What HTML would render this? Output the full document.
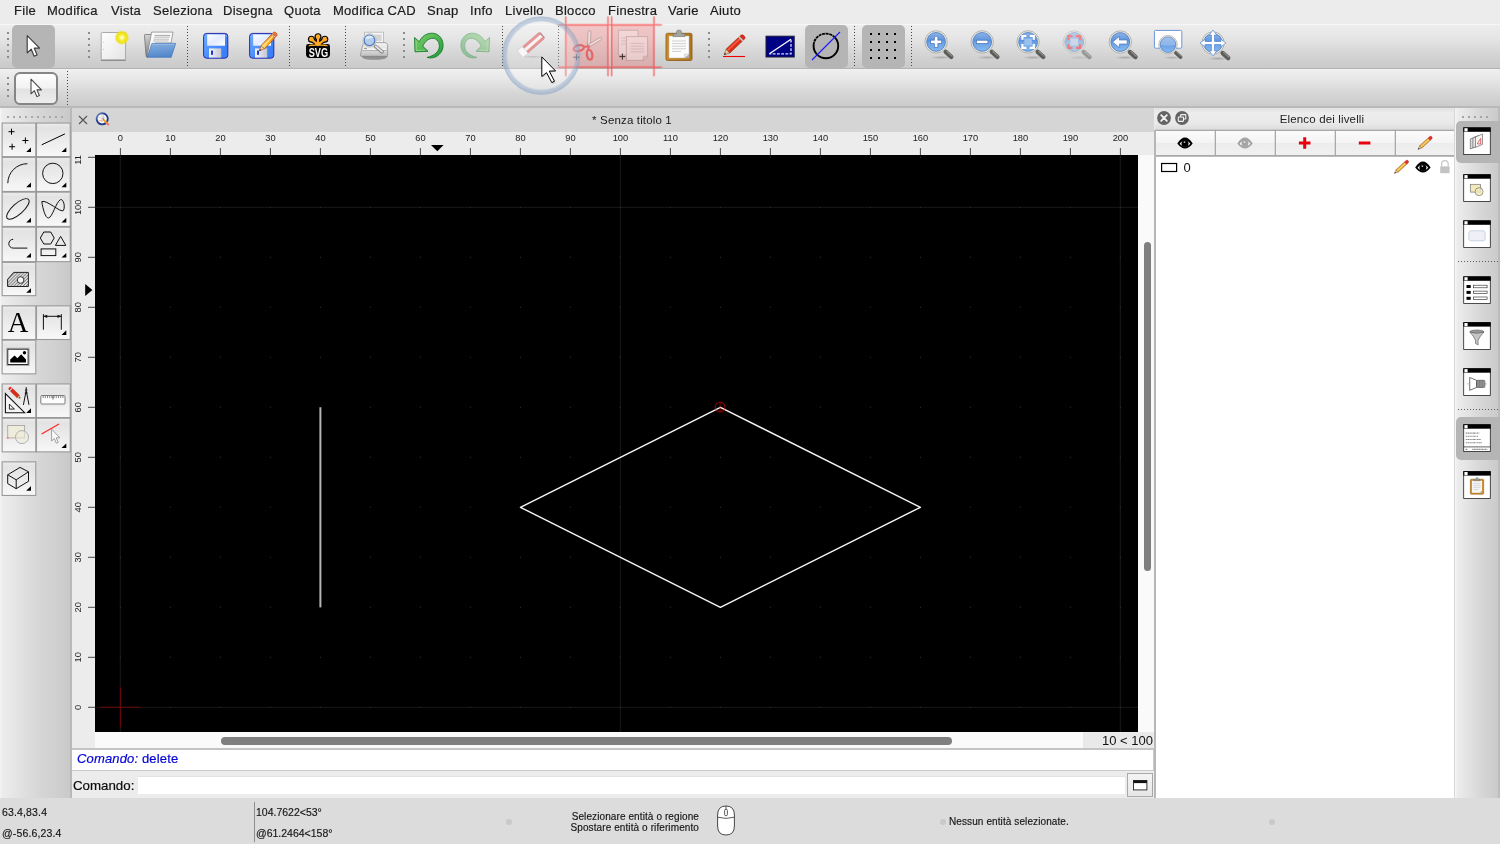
<!DOCTYPE html>
<html lang="it">
<head>
<meta charset="utf-8">
<title>Senza titolo 1</title>
<style>
html,body{margin:0;padding:0;}
body{will-change:transform;width:1500px;height:844px;position:relative;overflow:hidden;background:#ececec;font-family:"Liberation Sans",sans-serif;color:#1a1a1a;}
.abs{position:absolute;}
svg{position:absolute;overflow:visible;}
#menubar{left:0;top:0;width:1500px;height:24px;background:#ececec;}
#menubar span{position:absolute;top:2px;font-size:13px;letter-spacing:0.28px;line-height:18px;white-space:nowrap;color:#1c1c1c;-webkit-text-stroke:0.2px #1c1c1c;}
#tb1{left:0;top:24px;width:1500px;height:45px;background:linear-gradient(#ededed 0%,#e6e6e6 28%,#d6d6d6 65%,#c9c9c9 100%);border-top:1px solid #f6f6f6;border-bottom:1px solid #b4b4b4;box-sizing:border-box;}
#tb2{left:0;top:69px;width:1500px;height:39px;background:linear-gradient(#efefef 0%,#e6e6e6 28%,#d6d6d6 65%,#cbcbcb 100%);border-top:1px solid #f0f0f0;border-bottom:2px solid #b9b9b9;box-sizing:border-box;}
.sel{position:absolute;background:#b5b5b5;border-radius:5px;}
.hd{position:absolute;width:2px;height:2px;background:#8c8c8c;}
.vsep{position:absolute;width:1px;background:repeating-linear-gradient(#484848 0,#484848 1px,transparent 1px,transparent 3px);}
#leftpanel{left:0;top:108px;width:72px;height:690px;background:linear-gradient(90deg,#f6f6f6 0%,#ededed 2.5%,#e1e1e1 30%,#d6d6d6 55%,#cacaca 96.5%,#b9b9b9 97.5%,#b9b9b9 100%);}
.tbtn{position:absolute;width:33.6px;height:33.6px;box-sizing:border-box;border:1px solid #9c9c9c;background:linear-gradient(#dcdcdc 0%,#efefef 46%,#e5e5e5 50%,#f3f3f3 100%);}
.tbtn svg{left:-1px;top:-1px;}
#tabbar{left:72px;top:108px;width:1083px;height:24px;background:#d5d5d5;}
#tabtitle{left:532px;top:112px;width:200px;text-align:center;font-size:11.5px;letter-spacing:0.15px;line-height:16px;color:#1a1a1a;white-space:nowrap;}
#rulerbg{left:72px;top:132px;width:1082px;height:617px;background:#ececec;}
#vscroll{left:1138px;top:155px;width:16px;height:577px;background:#fafafa;}
#vthumb{left:1144px;top:242px;width:7px;height:329px;border-radius:4px;background:#7f7f7f;}
#hscroll{left:95px;top:732px;width:988px;height:17px;background:#fafafa;}
#hthumb{left:221px;top:736.5px;width:731px;height:8px;border-radius:4px;background:#7f7f7f;}
#zoomlabel{left:1083px;top:733px;width:70px;height:15px;background:#e9e9e9;font-size:13px;line-height:15px;text-align:right;color:#111;white-space:nowrap;}
#cmdhist{left:72px;top:748px;width:1082px;height:23px;background:#fff;border-top:2px solid #c4c4c4;border-bottom:1px solid #c9c9c9;border-right:1px solid #c9c9c9;box-sizing:border-box;font-size:13px;letter-spacing:0.15px;line-height:18px;color:#0505d6;-webkit-text-stroke:0.2px #0505d6;padding-left:5px;white-space:nowrap;}
#cmdline{left:72px;top:771px;width:1082px;height:27px;background:#ececec;}
#cmdlabel{left:73px;top:778px;font-size:13.3px;line-height:16px;color:#0c0c0c;-webkit-text-stroke:0.2px #0c0c0c;white-space:nowrap;}
#cmdinput{left:138px;top:776px;width:987px;height:18px;background:#fff;border-top:1px solid #e2e2e2;box-sizing:border-box;}
#cmdbtn{left:1127px;top:773px;width:26px;height:24px;box-sizing:border-box;border:1px solid #a8a8a8;background:linear-gradient(#f4f4f4,#e6e6e6);}
#statusbar{left:0;top:798px;width:1500px;height:46px;background:#dcdcdc;font-size:10.5px;letter-spacing:0.15px;color:#161616;-webkit-text-stroke:0.15px #161616;}
#statusbar span{position:absolute;white-space:nowrap;line-height:12px;}
#statusbar span.h{font-size:10px;letter-spacing:0.1px;}
.sdot{position:absolute;width:6px;height:6px;border-radius:3px;background:#c9c9c9;}
#dock{left:1154px;top:108px;width:300px;height:690px;background:#ececec;}
#docktitle{left:1155px;top:108px;width:299px;height:22px;background:linear-gradient(#e2e2e2 0%,#ededed 25%,#e9e9e9 70%,#dcdcdc 100%);}
#docktitle span{position:absolute;left:67px;width:200px;top:3px;text-align:center;font-size:11.5px;letter-spacing:0.15px;line-height:16px;color:#222;white-space:nowrap;}
.lbtn{position:absolute;top:130px;height:26px;box-sizing:border-box;border:1px solid #a9a9a9;box-shadow:0 0 0 0.300px #a9a9a9;background:linear-gradient(#fbfbfb 0%,#f4f4f4 48%,#ececec 52%,#f1f1f1 100%);}
#layerlist{left:1155px;top:156px;width:299px;height:642px;background:#fff;border-top:1px solid #bcbcbc;box-sizing:border-box;}
#docksep{left:1154px;top:130px;width:1.700px;height:668px;background:#b7b7b7;}
#rightbar{left:1454px;top:108px;width:46px;height:690px;background:linear-gradient(90deg,#c8c8c8 0%,#f4f4f4 3%,#ececec 8%,#e1e1e1 35%,#d6d6d6 60%,#cbcbcb 95%,#bcbcbc 96%,#bcbcbc 100%);}
.hsep{position:absolute;height:1px;background:repeating-linear-gradient(90deg,#5a5a5a 0,#5a5a5a 1px,transparent 1px,transparent 3px);}
</style>
</head>
<body>
<div id="menubar" class="abs">
<span style="left:14px">File</span><span style="left:47px">Modifica</span><span style="left:111px">Vista</span><span style="left:153px">Seleziona</span><span style="left:223px">Disegna</span><span style="left:284px">Quota</span><span style="left:333px">Modifica CAD</span><span style="left:427px">Snap</span><span style="left:470px">Info</span><span style="left:505px">Livello</span><span style="left:555px">Blocco</span><span style="left:608px">Finestra</span><span style="left:668px">Varie</span><span style="left:710px">Aiuto</span>
</div>
<div id="tb1" class="abs"></div>
<div id="tb2" class="abs"></div>
<div class="sel" style="left:12px;top:25px;width:43px;height:43px"></div>
<div class="sel" style="left:805px;top:25px;width:43px;height:43px"></div>
<div class="sel" style="left:862px;top:25px;width:43px;height:43px"></div>
<!-- handles -->
<div class="hd" style="left:7px;top:32px;box-shadow:0 6px #8c8c8c,0 12px #8c8c8c,0 18px #8c8c8c,0 24px #8c8c8c"></div>
<div class="hd" style="left:88px;top:32px;box-shadow:0 6px #8c8c8c,0 12px #8c8c8c,0 18px #8c8c8c,0 24px #8c8c8c"></div>
<div class="hd" style="left:403px;top:32px;box-shadow:0 6px #8c8c8c,0 12px #8c8c8c,0 18px #8c8c8c,0 24px #8c8c8c"></div>
<div class="hd" style="left:708px;top:32px;box-shadow:0 6px #8c8c8c,0 12px #8c8c8c,0 18px #8c8c8c,0 24px #8c8c8c"></div>
<div class="hd" style="left:7px;top:77px;box-shadow:0 6px #8c8c8c,0 12px #8c8c8c,0 18px #8c8c8c"></div>
<!-- dotted separators -->
<div class="vsep" style="left:187px;top:26px;height:40px"></div>
<div class="vsep" style="left:289px;top:26px;height:40px"></div>
<div class="vsep" style="left:345px;top:26px;height:40px"></div>
<div class="vsep" style="left:502px;top:26px;height:40px"></div>
<div class="vsep" style="left:558px;top:26px;height:40px"></div>
<div class="vsep" style="left:854px;top:26px;height:40px"></div>
<div class="vsep" style="left:911px;top:26px;height:40px"></div>
<div class="vsep" style="left:67px;top:71px;height:34px"></div>
<!-- toolbar 2 button -->
<div class="abs" style="left:14px;top:72px;width:44px;height:33px;box-sizing:border-box;border:2px solid #858585;border-radius:6px;background:linear-gradient(#fdfdfd 0%,#f2f2f2 48%,#e2e2e2 52%,#ededed 100%)"></div>
<svg id="tbicons" style="left:0;top:0" width="1500" height="108" viewBox="0 0 1500 108">
<defs>
<linearGradient id="gPage" x1="0" y1="0" x2="1" y2="1"><stop offset="0" stop-color="#ffffff"/><stop offset="1" stop-color="#e4e4e4"/></linearGradient>
<radialGradient id="gGlow"><stop offset="0" stop-color="#ffffff"/><stop offset="0.22" stop-color="#fff88a"/><stop offset="0.5" stop-color="#f2e818"/><stop offset="0.8" stop-color="#eee012" stop-opacity="0.85"/><stop offset="1" stop-color="#eee012" stop-opacity="0"/></radialGradient>
<linearGradient id="gFolder" x1="0" y1="0" x2="0.200" y2="1"><stop offset="0" stop-color="#88b0e0"/><stop offset="1" stop-color="#5488cc"/></linearGradient><linearGradient id="gFBack" x1="0" y1="0" x2="0" y2="1"><stop offset="0" stop-color="#d4d4d4"/><stop offset="1" stop-color="#7a7a7a"/></linearGradient>
<linearGradient id="gFloppy" x1="0" y1="0" x2="1" y2="0.6"><stop offset="0" stop-color="#74aeff"/><stop offset="0.5" stop-color="#4c90ff"/><stop offset="1" stop-color="#3a7ef8"/></linearGradient>
<linearGradient id="gLabel" x1="0" y1="0" x2="1" y2="1"><stop offset="0" stop-color="#ffffff"/><stop offset="0.5" stop-color="#e4ebff"/><stop offset="1" stop-color="#ffffff"/></linearGradient>
<linearGradient id="gShut" x1="0" y1="0" x2="1" y2="0"><stop offset="0" stop-color="#f4f4f8"/><stop offset="1" stop-color="#c4c6d2"/></linearGradient>
<linearGradient id="gPencilY" x1="0" y1="0" x2="1" y2="0"><stop offset="0" stop-color="#ffd24a"/><stop offset="0.5" stop-color="#ffb020"/><stop offset="1" stop-color="#e88a10"/></linearGradient>
<linearGradient id="gGreen" x1="0" y1="0" x2="1" y2="1"><stop offset="0" stop-color="#7fd06a"/><stop offset="1" stop-color="#1f9a3a"/></linearGradient>
<linearGradient id="gLens" x1="0" y1="0" x2="0" y2="1"><stop offset="0" stop-color="#8fb4e6"/><stop offset="0.45" stop-color="#5a92dc"/><stop offset="0.5" stop-color="#6aa0e4"/><stop offset="1" stop-color="#86baf0"/></linearGradient>
<linearGradient id="gPrinter" x1="0" y1="0" x2="0" y2="1"><stop offset="0" stop-color="#f4f4f4"/><stop offset="0.45" stop-color="#e2e2e2"/><stop offset="1" stop-color="#bcbcbc"/></linearGradient>
<linearGradient id="gClip" x1="0" y1="0" x2="1" y2="0"><stop offset="0" stop-color="#c88a2a"/><stop offset="1" stop-color="#b07418"/></linearGradient>
<radialGradient id="gShadow"><stop offset="0" stop-color="#000" stop-opacity="0.2"/><stop offset="1" stop-color="#000" stop-opacity="0"/></radialGradient>
<g id="lens">
 <ellipse cx="5" cy="15.6" rx="11" ry="1.8" fill="url(#gShadow)"/>
 <path d="M9.6 10L15.2 15" stroke="#5c5c58" stroke-width="4.4" stroke-linecap="round"/>
 <path d="M10.6 9.4L16 14.2" stroke="#8e8e8a" stroke-width="1.2" stroke-linecap="round"/>
 <circle cx="0" cy="0" r="11.2" fill="#e8e8e2" stroke="#a6a6a0" stroke-width="0.8"/>
 <circle cx="0" cy="0" r="9.4" fill="url(#gLens)" stroke="#4a78c0" stroke-width="0.8"/>
</g>
<path id="arrow" d="M0 0V16.6L3.9 13.1L6.7 19.8L9.5 18.6L6.8 12.1H11.9Z"/>
</defs>

<!-- select arrow (tb1) -->
<use href="#arrow" transform="translate(27.2,35.6) scale(1.04)" fill="#fff" stroke="#3c3c3c" stroke-width="1.1" stroke-linejoin="round"/>
<!-- select arrow (tb2) -->
<use href="#arrow" transform="translate(31,79.2) scale(0.88)" fill="#fff" stroke="#444" stroke-width="1.2" stroke-linejoin="round"/>

<!-- new file -->
<rect x="101.2" y="32.5" width="24.4" height="27.6" rx="1.2" fill="url(#gPage)" stroke="#a2a2a2" stroke-width="0.9"/>
<path d="M101 60.3H125.8" stroke="#8a8a8a" stroke-width="1.2"/>
<path d="M103 42.3h1.2M103 49.5h1.2" stroke="#bbb" stroke-width="0.8"/>
<circle cx="121.9" cy="37.6" r="7.3" fill="url(#gGlow)"/>

<!-- open folder -->
<path d="M145.200 34.500h5.600q0.800 0 0.800 0.800l-3.600 21.700h-1q-0.800 0-0.900-0.800l-1.700-20.900q0-0.800 0.800-0.800z" fill="url(#gFBack)" stroke="#6a6a6a" stroke-width="0.700"/>
<path d="M151.600 32.100h21.400l-2 10.900h-16l-6.800 13.400l-1-0.400z" fill="#fbfbfb" stroke="#7c7c7c" stroke-width="0.700" stroke-linejoin="round"/>
<path d="M154.600 35.600h15.600" stroke="#b2b2b2" stroke-width="1.500"/>
<path d="M154 37.600h15.600M153.500 39.300h15.600M153 41h15.600" stroke="#d0d0d0" stroke-width="1.300"/>
<path d="M151.900 43.400h23.800l-4.500 13.900h-24z" fill="url(#gFolder)" stroke="#3f72b8" stroke-width="0.700" stroke-linejoin="round"/>
<path d="M152.600 44.300h22" stroke="#a6c6ec" stroke-width="0.700"/>
<!-- save -->
<g id="floppy">
<rect x="203.6" y="33.4" width="24.2" height="24.8" rx="3" fill="url(#gFloppy)" stroke="#2a2aa8" stroke-width="1"/>
<rect x="207.200" y="34.400" width="17.800" height="11.300" fill="url(#gLabel)"/>
<rect x="209" y="48.4" width="12.2" height="9.2" fill="url(#gShut)"/>
<rect x="211" y="50.6" width="2" height="4.2" fill="#1a3ad0"/>
<rect x="225.6" y="35.4" width="0.9" height="1.2" fill="#cfe0ff"/>
</g>
<!-- save as -->
<use href="#floppy" x="46"/>
<g transform="translate(259.300,50.900) rotate(-46.800)">
<path d="M0 0L5.200 -2.400L5.200 2.400Z" fill="#ecd0a8" stroke="#9a3a10" stroke-width="0.500"/>
<path d="M0 0L1.900 -0.900L1.900 0.900Z" fill="#222"/>
<rect x="5.200" y="-2.400" width="15.400" height="4.800" fill="url(#gPencilY)" stroke="#b03a10" stroke-width="0.600"/>
<rect x="5.200" y="-0.900" width="15.400" height="1.500" fill="#ffe890" opacity="0.900"/>
<rect x="20.600" y="-2.400" width="1.200" height="4.800" fill="#e4e0d8" stroke="#b03a10" stroke-width="0.300"/>
<path d="M21.800 -2.400h1.300a1.600 2.400 0 0 1 0 4.800h-1.300z" fill="#f07a2a" stroke="#b03010" stroke-width="0.500"/>
</g>

<!-- SVG export icon -->
<g>
<path d="M306 46.400q0-2.400 2.400-2.400h19.200q2.400 0 2.400 2.400v7.600q0 4-4 4h-16q-4 0-4-4z" fill="#050505"/>
<g stroke="#050505" stroke-width="4.600" stroke-linecap="round"><path d="M318 44.600V37M318 44.600L311.800 39.600M318 44.600L324.400 39.600"/></g>
<g fill="#050505"><circle cx="318" cy="36.700" r="3.500"/><circle cx="311.400" cy="39.200" r="3.500"/><circle cx="324.800" cy="39.200" r="3.500"/></g>
<g stroke="#ffa928" stroke-width="2.300" stroke-linecap="round"><path d="M318 44.800V37M318 44.800L311.800 39.600M318 44.800L324.400 39.600"/></g>
<g fill="#ffa928"><circle cx="318" cy="36.700" r="2.350"/><circle cx="311.400" cy="39.200" r="2.350"/><circle cx="324.800" cy="39.200" r="2.350"/><path d="M308.200 46.200q0.600-1.600 3-1.600h13.800q2.400 0 3 1.600q-4.900-0.600-9.900-0.400q-5-0.200-9.900 0.400z"/><path d="M314.400 45.200q3.600-3.400 7.200 0z"/></g>
<text transform="translate(318.400,57.100) scale(0.690,1)" text-anchor="middle" font-family="Liberation Sans, sans-serif" font-weight="bold" font-size="13.300" fill="#fff">SVG</text>
</g>

<!-- print preview -->
<g>
<ellipse cx="374.500" cy="57.800" rx="12" ry="1.900" fill="#000" fill-opacity="0.300"/>
<rect x="364.600" y="32.200" width="18.800" height="14" fill="#f4f4f4" stroke="#b4b4b4" stroke-width="0.800"/>
<rect x="374" y="34.600" width="7.600" height="6.400" fill="#d4d4d4"/>
<path d="M362.800 44.400l2.600-1.800h19.800l2.400 1.800v10.600q0 1.400-1.400 1.400h-24.400q-1.400 0-1.400-1.400z" fill="url(#gPrinter)" stroke="#9c9c9c" stroke-width="0.900"/>
<path d="M361.800 56.600h25.600" stroke="#8a8a8a" stroke-width="1.400"/>
<path d="M362.600 50.400h23.800" stroke="#a2a2a2" stroke-width="0.800"/><path d="M363 49.200h23" stroke="#fafafa" stroke-width="1.400"/>
<path d="M364 48.600h3" stroke="#8a8a8a" stroke-width="0.900"/>
<path d="M375.500 46.400L382 51.800" stroke="#8c8c8c" stroke-width="3.800" stroke-linecap="round"/>
<path d="M375.800 46.400L382 51.600" stroke="#e6e6e6" stroke-width="1.800" stroke-linecap="round"/>
<circle cx="369.500" cy="40.400" r="6.700" fill="#e6e6e2" stroke="#b0b0aa" stroke-width="0.600"/><circle cx="369.500" cy="40.400" r="5.300" fill="#b4cce8" stroke="#4a7ac4" stroke-width="1.200"/>
<path d="M365 39.600a4.600 4.600 0 0 1 8.600-1.800q-4.300 1.200-8.600 1.800z" fill="#e6f0fa" opacity="0.800"/>
</g>

<!-- undo -->
<g id="undo">
<path d="M414.500 37.500L415 51.800L428 51.300L422.800 46.300C424.500 41.600 429 38.100 433 38.300C437 38.600 439.700 42.500 439.300 47C438.900 51.500 434.500 55.900 427 57.400C434 59.600 441.600 55 442.900 47.500C444.100 40 439.500 33.500 432.500 33.200C426.500 33 421.600 36.400 419.300 41.800Z" fill="url(#gGreen)" stroke="#167a2c" stroke-width="0.900" stroke-linejoin="round"/>
<path d="M416 40.500L416.300 50.500L425 50.200" fill="none" stroke="#b6ec9c" stroke-width="0.800" stroke-opacity="0.700"/>
</g>
<!-- redo (disabled) -->
<use href="#undo" transform="translate(904,0) scale(-1,1)" opacity="0.420"/>

<!-- eraser (disabled) -->
<g opacity="0.880">
<ellipse cx="533" cy="56.800" rx="13" ry="1.400" fill="url(#gShadow)"/>
<g transform="translate(531,44.800) rotate(-41)">
<rect x="-14" y="-4.200" width="28" height="8.400" rx="1" fill="#e26a6a" stroke="#b85050" stroke-width="0.500"/>
<rect x="-14" y="-1.600" width="28" height="3.200" fill="#f4f4f4"/>
<rect x="-14.400" y="-4.400" width="6.600" height="8.800" fill="#fafafa" stroke="#c4c4c4" stroke-width="0.500"/>
<path d="M14 -4.200l1.400 0.900v6.600l-1.400 0.900z" fill="#a85858"/>
</g>
</g>

<!-- cut / copy highlighted -->
<rect x="565.800" y="24.900" width="42.200" height="42.300" fill="#ff5a5a" fill-opacity="0.260"/>
<rect x="611.700" y="24.900" width="42.300" height="42.300" fill="#ff5a5a" fill-opacity="0.260"/>
<g stroke="#ff3030" stroke-opacity="0.220" stroke-width="2.600" stroke-linecap="round">
<path d="M565.800 18V75M608 18V75M611.700 18V75M654 18V75M560 24.900H660M560 67.200H660"/>
</g>
<g stroke="#ff2828" stroke-opacity="0.500" stroke-width="1" stroke-linecap="round">
<path d="M565.800 16.500V76M608 16.500V76M611.700 16.500V76M654 16.500V76M558 24.900H662M558 67.200H662"/>
</g>
<!-- scissors -->
<g opacity="0.620">
<path d="M588 31.400Q589.600 30.200 591 31.200L590.200 46.800L587.400 46.600Z" fill="#f4eaea" stroke="#8a7a7a" stroke-width="0.700"/>
<path d="M600.600 37.200Q601.800 38.200 601.200 39.800L589 47.200L587.200 45.200Z" fill="#f4eaea" stroke="#8a7a7a" stroke-width="0.700"/>
<ellipse cx="578.800" cy="48.200" rx="5.200" ry="2.800" transform="rotate(-14 578.800 48.200)" fill="none" stroke="#e03a3a" stroke-width="2.300"/>
<ellipse cx="589.600" cy="54.800" rx="2.700" ry="4.900" transform="rotate(-10 589.600 54.800)" fill="none" stroke="#e03a3a" stroke-width="2.300"/>
<path d="M583.400 47L588.600 46.200L588.200 50" stroke="#e03a3a" stroke-width="2" fill="none"/>
</g>
<path d="M576.400 54.200v6M573.400 57.200h6" stroke="#4a3a3a" stroke-width="0.900"/>
<!-- copy -->
<g opacity="0.380">
<path d="M618.400 30.200h19.600v25h-19.600z" fill="#fbf4f4" stroke="#8a7070" stroke-width="0.800"/>
<path d="M621 38h5M621 41h5M621 44h5" stroke="#b8a0a0" stroke-width="0.800"/>
<path d="M626.400 36.600h21.200v19.600l-4.400 4.200h-16.800z" fill="#fdf6f6" stroke="#8a7070" stroke-width="0.800"/>
<path d="M647.600 56.200h-4.400v4.200z" fill="#e4d4d4" stroke="#8a7070" stroke-width="0.600"/>
<path d="M630.600 43.400h13.600M630.600 46.200h13.600M630.600 49h13.600M630.600 51.800h13.600" stroke="#b8a0a0" stroke-width="0.800"/>
</g>
<path d="M622.400 53.600v6M619.400 56.600h6" stroke="#3a2a2a" stroke-width="1"/>
<!-- paste -->
<g>
<rect x="666" y="33.300" width="26" height="27.200" rx="1.500" fill="url(#gClip)" stroke="#8c5a10" stroke-width="0.800"/>
<path d="M669 36h20v22h-20z" fill="#fcfcfc" stroke="#b8b8b8" stroke-width="0.500"/>
<path d="M689 54v4h-4.600z" fill="#a8a8a8"/>
<path d="M684.400 58v-4h4.600" fill="#e6e6e6" stroke="#bbb" stroke-width="0.400"/>
<path d="M672 41h14M672 43.600h14M672 46.200h14M672 48.800h14M672 51.400h9" stroke="#c8c8c8" stroke-width="0.900"/>
<path d="M673 36.600v-2.800h3.200l0.600-2.600q0.200-1 1.200-1h2q1 0 1.200 1l0.600 2.600h3.200v2.800z" fill="#a4a69c" stroke="#70726a" stroke-width="0.600"/>
</g>

<!-- red pencil -->
<g>
<path d="M723 56.500H745" stroke="#f00000" stroke-width="1.100"/>
<g transform="translate(724.100,54.800) rotate(-43.500)">
<path d="M0 0L5.400-2.700V2.700Z" fill="#e9c9a2" stroke="#7a4a1a" stroke-width="0.500"/>
<path d="M0 0L2-1V1Z" fill="#1a1a1a"/>
<rect x="5.400" y="-2.700" width="17" height="5.400" fill="#e02a1a" stroke="#8a3a10" stroke-width="0.600"/>
<rect x="5.400" y="-1.400" width="17" height="1.400" fill="#f4604a"/>
<rect x="22.400" y="-2.700" width="1.800" height="5.400" fill="#d0d0d0" stroke="#999" stroke-width="0.300"/>
<path d="M24.200-2.700h1.400a2 2.700 0 0 1 0 5.400h-1.400z" fill="#f02020" stroke="#8a3a10" stroke-width="0.500"/>
</g>
</g>

<!-- draft mode: blue rect with dashed triangle -->
<rect x="766" y="36.200" width="28.200" height="20.800" fill="#000084" stroke="#1c1c3c" stroke-width="1"/>
<path d="M769.400 53.800L791 39.200" stroke="#fff" stroke-width="1.300"/>
<path d="M791 39.800V53.800H769.400" stroke="#dcdcff" stroke-width="1.300" fill="none" stroke-dasharray="2.800 1.400"/>

<!-- circle with line -->
<circle cx="825.900" cy="45.900" r="12.300" fill="none" stroke="#000" stroke-width="1.900"/>
<path d="M834.600 37.200A12.300 12.300 0 0 0 813.700 44" fill="none" stroke="#b5b5b5" stroke-width="2.300" stroke-dasharray="0.700 2.900" stroke-dashoffset="1"/>
<path d="M812 60L840 32" stroke="#1a1aff" stroke-width="1.100"/>

<!-- grid dots -->
<g fill="#000">
<rect x="870" y="33" width="2" height="2"/><rect x="878" y="33" width="2" height="2"/><rect x="886" y="33" width="2" height="2"/><rect x="894" y="33" width="2" height="2"/>
<rect x="870" y="41" width="2" height="2"/><rect x="878" y="41" width="2" height="2"/><rect x="886" y="41" width="2" height="2"/><rect x="894" y="41" width="2" height="2"/>
<rect x="870" y="49" width="2" height="2"/><rect x="878" y="49" width="2" height="2"/><rect x="886" y="49" width="2" height="2"/><rect x="894" y="49" width="2" height="2"/>
<rect x="870" y="57" width="2" height="2"/><rect x="878" y="57" width="2" height="2"/><rect x="886" y="57" width="2" height="2"/><rect x="894" y="57" width="2" height="2"/>
</g>

<!-- zoom in -->
<use href="#lens" x="936.100" y="41.900"/>
<path d="M936.100 36.400v11M930.600 41.900h11" stroke="#3a68b0" stroke-width="4.200"/>
<path d="M936.100 36.800v10.200M931 41.900h10.200" stroke="#fff" stroke-width="2.800"/>
<!-- zoom out -->
<use href="#lens" x="982.200" y="41.900"/>
<path d="M976.200 41.900h12" stroke="#3a68b0" stroke-width="4"/>
<path d="M976.800 41.900h10.800" stroke="#fff" stroke-width="2.600"/>
<!-- zoom auto -->
<use href="#lens" x="1028.100" y="41.900"/>
<rect x="1024.300" y="38.400" width="7.600" height="7" fill="#9cc0ee"/>
<path d="M1022.400 39.800v-3.800h4M1029.800 36h4v3.800M1033.800 44v3.800h-4M1026.400 47.800h-4v-3.800" stroke="#fff" stroke-width="2.200" fill="none"/>
<!-- zoom selection (disabled) -->
<g opacity="0.500">
<use href="#lens" x="1074.200" y="42"/>
<rect x="1070.400" y="38.500" width="7.600" height="7" fill="#b8cff0"/>
<path d="M1068.400 39.900v-3.800h4M1076 36.100h4v3.800M1080 44.100v3.800h-4M1072.400 47.900h-4v-3.800" stroke="#ff2020" stroke-width="2.200" fill="none"/>
</g>
<!-- zoom previous -->
<use href="#lens" x="1120.300" y="42"/>
<path d="M1112.600 42L1119.400 36.400V40h7.800v4h-7.800v3.600Z" fill="#fff" stroke="#3a68b0" stroke-width="0.600"/>
<!-- window zoom -->
<rect x="1154.400" y="30.400" width="27.400" height="17.800" rx="1.200" fill="#fff" stroke="#6c98dc" stroke-width="1"/>
<g transform="translate(1168,44.700) scale(0.830)"><use href="#lens"/></g>
<path d="M1160.600 44.700a7.400 7.400 0 0 1 14.800 0q-7.400 1.600-14.800 0z" fill="#a8c6ee" opacity="0.700"/>
<!-- pan zoom -->
<use href="#lens" x="1213" y="43"/>
<g transform="translate(1213,43) scale(1.100) translate(-1213,-43)"><path d="M1213 31.200L1216.400 35.800H1214.400V41.600H1220.200V39.600L1224.800 43L1220.200 46.400V44.400H1214.400V50.200H1216.400L1213 54.800L1209.600 50.200H1211.600V44.400H1205.800V46.400L1201.200 43L1205.800 39.600V41.600H1211.600V35.800H1209.600Z" fill="#fff" stroke="#4a80d0" stroke-width="0.600"/></g>

<!-- click highlight ring -->
<circle cx="541.200" cy="55.600" r="37" fill="#ffffff" fill-opacity="0.220" stroke="#7d9cc0" stroke-opacity="0.400" stroke-width="4.200"/>
<circle cx="541.200" cy="55.600" r="38.600" fill="none" stroke="#9ab4d2" stroke-opacity="0.350" stroke-width="1.500"/>
<circle cx="541.200" cy="55.600" r="34.500" fill="none" stroke="#9ab4d2" stroke-opacity="0.250" stroke-width="1.500"/>
<!-- mouse cursor -->
<path transform="translate(542.200,56.900)" d="M0.500 1.200V20.800L5.200 16.900L10.500 26.900L13.200 25.500L8 15.400L14.200 15.200Z" fill="#000" fill-opacity="0.180"/>
<path transform="translate(541.300,55.700)" d="M0.500 1.200V20.800L5.200 16.900L10.500 26.900L13.200 25.500L8 15.400L14.200 15.200Z" fill="#fff" stroke="#000" stroke-width="1" stroke-linejoin="miter"/>
</svg>
<div id="leftpanel" class="abs"></div>
<svg id="lefticons" style="left:0;top:0" width="72" height="844" viewBox="0 0 72 844">
<defs><linearGradient id="gBtn" x1="0" y1="0" x2="0" y2="1"><stop offset="0" stop-color="#ececec"/><stop offset="0.14" stop-color="#e3e3e3"/><stop offset="0.5" stop-color="#ebebeb"/><stop offset="1" stop-color="#f8f8f8"/></linearGradient></defs>
<g fill="url(#gBtn)" stroke="#9a9a9a" stroke-width="1.1"><rect x="2.15" y="123.05" width="33.65" height="33.60"/><rect x="36.50" y="123.05" width="33.75" height="33.60"/><rect x="2.15" y="157.35" width="33.65" height="34.10"/><rect x="36.50" y="157.35" width="33.75" height="34.10"/><rect x="2.15" y="192.15" width="33.65" height="34.30"/><rect x="36.50" y="192.15" width="33.75" height="34.30"/><rect x="2.15" y="227.15" width="33.65" height="34.50"/><rect x="36.50" y="227.15" width="33.75" height="34.50"/><rect x="2.15" y="262.35" width="33.65" height="33.30"/><rect x="2.15" y="305.85" width="33.65" height="33.65"/><rect x="36.50" y="305.85" width="33.75" height="33.65"/><rect x="2.15" y="340.20" width="33.65" height="33.65"/><rect x="2.15" y="383.95" width="33.65" height="33.60"/><rect x="36.50" y="383.95" width="33.75" height="33.60"/><rect x="2.15" y="418.25" width="33.65" height="33.60"/><rect x="36.50" y="418.25" width="33.75" height="33.60"/><rect x="2.15" y="461.85" width="33.65" height="33.60"/></g>
<g fill="#a8a8a8"><rect x="7" y="116" width="2" height="2"/><rect x="13" y="116" width="2" height="2"/><rect x="19" y="116" width="2" height="2"/><rect x="25" y="116" width="2" height="2"/><rect x="31" y="116" width="2" height="2"/><rect x="37" y="116" width="2" height="2"/><rect x="43" y="116" width="2" height="2"/><rect x="49" y="116" width="2" height="2"/><rect x="55" y="116" width="2" height="2"/><rect x="61" y="116" width="2" height="2"/></g>
<g transform="translate(1.6,122.6)"><path d="M9.900 6.100v6M6.900 9.100h6M23.800 14.900v6M20.800 17.900h6M10.500 21.100v6M7.500 24.100h6" stroke="#000" stroke-width="1"/><path d="M29.400 24.800V29.400H24.600Z" fill="#000"/></g>
<g transform="translate(36.9,122.6)"><path d="M4.800 22.200L28 11.300" stroke="#000" stroke-width="1"/><path d="M29.400 24.800V29.400H24.600Z" fill="#000"/></g>
<g transform="translate(1.6,157.8)"><path d="M6.200 25.400A19.600 19.600 0 0 1 25.800 5.900" stroke="#111" stroke-width="1" fill="none"/><path d="M29.400 24.800V29.400H24.600Z" fill="#000"/></g>
<g transform="translate(36.9,157.8)"><circle cx="15.900" cy="15.600" r="10.200" stroke="#111" stroke-width="1" fill="none"/><path d="M29.400 24.800V29.400H24.600Z" fill="#000"/></g>
<g transform="translate(1.6,193.0)"><ellipse cx="16.300" cy="15.900" rx="14.200" ry="5.400" transform="rotate(-41.500 16.300 15.900)" stroke="#111" stroke-width="1" fill="none"/><path d="M29.400 24.800V29.400H24.600Z" fill="#000"/></g>
<g transform="translate(36.9,193.0)"><path d="M4.900 8.600C6 16 8.500 25.400 11.600 25C15.400 24.400 19 9.600 23.300 6.800C26.400 5 28.600 13.400 26.600 17.400C24.400 20.600 9.500 6.200 4.900 8.600Z" stroke="#111" stroke-width="1" fill="none"/><path d="M29.400 24.800V29.400H24.600Z" fill="#000"/></g>
<g transform="translate(1.6,228.2)"><path d="M11.600 11.100A4.400 4.400 0 0 0 11.600 19.900H25.800" stroke="#111" stroke-width="1" fill="none"/><path d="M29.400 24.800V29.400H24.600Z" fill="#000"/></g>
<g transform="translate(36.9,228.2)"><path d="M3.400 9.800L6.900 3.800H13.800L17.300 9.800L13.800 15.800H6.900Z" stroke="#111" stroke-width="1" fill="none"/><path d="M18.500 17.200H28.900L23.700 8.100Z" stroke="#111" stroke-width="1" fill="none"/><rect x="4.200" y="20.700" width="14.700" height="6.700" stroke="#111" stroke-width="1" fill="none"/><path d="M29.400 24.800V29.400H24.600Z" fill="#000"/></g>
<g transform="translate(1.6,263.4)"><defs><pattern id="hat" width="2.200" height="2.200" patternUnits="userSpaceOnUse" patternTransform="rotate(-45)"><rect width="2.200" height="2.200" fill="#e8e8e8"/><path d="M0 0.500H2.200" stroke="#555" stroke-width="0.700"/></pattern></defs><path d="M6 23.100V15.900L12.100 9H26.800V23.100Z" fill="url(#hat)" stroke="#222" stroke-width="1"/><circle cx="19" cy="16.600" r="3.300" fill="#f4f4f4" stroke="#222" stroke-width="0.900"/><path d="M29.400 24.800V29.400H24.600Z" fill="#000"/></g>
<g transform="translate(1.6,305.5)"><text x="16.400" y="26.400" text-anchor="middle" font-family="Liberation Serif, serif" font-size="28.500" fill="#000">A</text></g>
<g transform="translate(36.9,305.5)"><path d="M6.500 8.600V24.200M24.400 8.600V24.200M6.500 10.800H24.400" stroke="#111" stroke-width="1" fill="none"/><path d="M6.500 10.800L10.300 9.200V12.400ZM24.400 10.800L20.600 9.200V12.400Z" fill="#111"/><path d="M29.400 24.800V29.400H24.600Z" fill="#000"/></g>
<g transform="translate(1.6,340.8)"><rect x="5.200" y="7.400" width="22.300" height="17.300" fill="#fff" stroke="#999" stroke-width="0.800"/><rect x="6.200" y="8.400" width="20.300" height="15.300" fill="#fff" stroke="#111" stroke-width="0.900"/><path d="M8.600 21.800V18.600L13 14.600L15.800 17.400L19.600 13.400L24.400 18.800V21.800Z" fill="#000"/><circle cx="22.900" cy="11.900" r="1.700" fill="#000"/></g>
<g transform="translate(1.6,383.5)"><path d="M3.800 10V29.200H23Z" fill="#f4f4f4" stroke="#111" stroke-width="1.100"/><path d="M7.800 20.600V25.600H12.800Z" fill="none" stroke="#111" stroke-width="0.900"/><g transform="translate(18.600,14.800) rotate(-136)"><path d="M0 0L3-1.700V1.700Z" fill="#e8c8a0" stroke="#7a4a1a" stroke-width="0.400"/><path d="M0 0L1.100-0.600V0.600Z" fill="#111"/><rect x="3" y="-1.700" width="9.400" height="3.400" fill="#e02818" stroke="#8a2a10" stroke-width="0.400"/><rect x="12.400" y="-1.700" width="1" height="3.400" fill="#ccc"/><path d="M13.400-1.700h0.800a1.300 1.700 0 0 1 0 3.400h-0.800z" fill="#f02020"/></g><path d="M24.600 3.600V7M24.600 7L21.800 21.400M24.600 7L27.400 21.400M23.200 9.600H26" stroke="#111" stroke-width="1" fill="none"/><circle cx="24.600" cy="6.600" r="1.200" fill="#333"/><path d="M29.400 24.800V29.400H24.600Z" fill="#000"/></g>
<g transform="translate(36.9,383.5)"><rect x="3.900" y="12" width="24.200" height="8.500" rx="1" fill="#fdfdfd" stroke="#6e6e6e" stroke-width="0.900"/><path d="M6.200 12.400v2.200M8.400 12.400v2.200M10.600 12.400v2.200M12.800 12.400v2.200M15 12.400v2.200M17.200 12.400v2.200M19.400 12.400v2.200M21.600 12.400v2.200M23.800 12.400v2.200M26 12.400v2.200" stroke="#555" stroke-width="0.700"/><path d="M16.100 12.400v3.600" stroke="#555" stroke-width="0.900"/><path d="M4 21.200H28" stroke="#bbb" stroke-width="0.800"/></g>
<g transform="translate(1.6,418.6)"><g opacity="1"><rect x="6.100" y="6.900" width="16.900" height="12.400" fill="#efecd9" stroke="#a8a8a8" stroke-width="0.900"/><circle cx="20.400" cy="18.500" r="6.500" fill="#efecd9" fill-opacity="0.600" stroke="#a8a8a8" stroke-width="0.900"/><circle cx="6.100" cy="19.300" r="1.100" fill="#f08a8a"/></g></g>
<g transform="translate(36.9,418.6)"><path d="M4.700 15.300L22.100 5.400" stroke="#ff2020" stroke-width="1.100"/><path d="M14.700 10.600V22.400L17.400 19.900L19.500 24.600L21.300 23.800L19.300 19.200H22.900Z" fill="#fafafa" stroke="#8a8a8a" stroke-width="0.800" stroke-linejoin="round"/><path d="M29.400 24.800V29.400H24.600Z" fill="#000"/></g>
<g transform="translate(1.6,461.3)"><path d="M18.400 6.100L6.100 13.500V22.300L14.600 27.400L26.900 20V10.500ZM6.100 13.500L14.600 18.500L26.900 10.500M14.600 18.500V27.400" fill="none" stroke="#111" stroke-width="1" stroke-linejoin="round"/><path d="M29.400 24.800V29.400H24.600Z" fill="#000"/></g>
</svg>
<div id="tabbar" class="abs"></div>
<div id="tabtitle" class="abs">* Senza titolo 1</div>
<svg style="left:72px;top:108px" width="60" height="24" viewBox="0 0 60 24">
<defs><linearGradient id="gRing" x1="0" y1="0" x2="1" y2="1"><stop offset="0" stop-color="#8ea2cc"/><stop offset="0.35" stop-color="#2a4290"/><stop offset="1" stop-color="#1c3484"/></linearGradient></defs>
<path d="M7 8L15 16M15 8L7 16" stroke="#555" stroke-width="1.100"/>
<circle cx="30.200" cy="10.800" r="5.600" fill="#f6f6f6" stroke="url(#gRing)" stroke-width="1.900"/>
<path d="M26.500 12.600h4M31.600 7.400v3" stroke="#e08a8a" stroke-width="0.600"/>
<path d="M27 9.600q3 1.400 6 0M30 6.600v8" stroke="#b4b4b4" stroke-width="0.500" fill="none"/>
<path d="M31.200 11.400L35.400 15.600" stroke="#f2a21a" stroke-width="2" stroke-linecap="butt"/>
<path d="M35.200 15.400L36.300 16.500" stroke="#ea7a7a" stroke-width="2.100" stroke-linecap="round"/>
<path d="M30.400 10.400l1.800 0.400l-1.200 1.200z" fill="#7a5a30"/>
</svg>
<div id="rulerbg" class="abs"></div>
<svg id="cv" style="left:72px;top:131px" width="1082" height="618" viewBox="0 0 1082 618" font-family="Liberation Sans, sans-serif" font-size="9.3" fill="#222">
<defs><pattern id="dots" x="47.9" y="25.8" width="50" height="50" patternUnits="userSpaceOnUse"><rect x="0" y="0" width="1" height="1" fill="#333"/></pattern><clipPath id="lr"><rect x="0" y="24" width="23" height="600"/></clipPath><clipPath id="cc"><rect x="23" y="24" width="1043" height="577"/></clipPath></defs>
<rect x="23" y="24" width="1043" height="577" fill="#000"/>
<g clip-path="url(#cc)">
<line x1="48.4" y1="24" x2="48.4" y2="601" stroke="#131313" stroke-width="1.35"/>
<line x1="548.4" y1="24" x2="548.4" y2="601" stroke="#131313" stroke-width="1.35"/>
<line x1="1048.4" y1="24" x2="1048.4" y2="601" stroke="#131313" stroke-width="1.35"/>
<line x1="23" y1="576.3" x2="1066" y2="576.3" stroke="#131313" stroke-width="1.35"/>
<line x1="23" y1="76.3" x2="1066" y2="76.3" stroke="#131313" stroke-width="1.35"/>
<rect x="23" y="24" width="1043" height="577" fill="url(#dots)"/>
<path d="M28.4 576.3H68.4M48.4 556.3V596.3" stroke="#6c0808" stroke-width="1.1" fill="none"/>
<line x1="248.4" y1="276.3" x2="248.4" y2="476.3" stroke="#b6b6b6" stroke-width="2"/>
<path d="M448.4 376.3L648.4 276.3L848.4 376.3L648.4 476.3Z" stroke="#f6f6f6" stroke-width="1.4" fill="none" stroke-linejoin="round"/>
<g fill="none"><circle cx="648.05" cy="276.10" r="4.9" stroke="#ff0000" stroke-opacity="0.55" stroke-width="1.15"/><path d="M648.05 271.20v9.8" stroke="#ff0000" stroke-opacity="0.36" stroke-width="1.4"/></g>
</g>
<line x1="48.4" y1="17" x2="48.4" y2="24" stroke="#4a4a4a" stroke-width="1"/>
<text x="48.4" y="10.3" text-anchor="middle">0</text>
<line x1="98.4" y1="17" x2="98.4" y2="24" stroke="#4a4a4a" stroke-width="1"/>
<text x="98.4" y="10.3" text-anchor="middle">10</text>
<line x1="148.4" y1="17" x2="148.4" y2="24" stroke="#4a4a4a" stroke-width="1"/>
<text x="148.4" y="10.3" text-anchor="middle">20</text>
<line x1="198.4" y1="17" x2="198.4" y2="24" stroke="#4a4a4a" stroke-width="1"/>
<text x="198.4" y="10.3" text-anchor="middle">30</text>
<line x1="248.4" y1="17" x2="248.4" y2="24" stroke="#4a4a4a" stroke-width="1"/>
<text x="248.4" y="10.3" text-anchor="middle">40</text>
<line x1="298.4" y1="17" x2="298.4" y2="24" stroke="#4a4a4a" stroke-width="1"/>
<text x="298.4" y="10.3" text-anchor="middle">50</text>
<line x1="348.4" y1="17" x2="348.4" y2="24" stroke="#4a4a4a" stroke-width="1"/>
<text x="348.4" y="10.3" text-anchor="middle">60</text>
<line x1="398.4" y1="17" x2="398.4" y2="24" stroke="#4a4a4a" stroke-width="1"/>
<text x="398.4" y="10.3" text-anchor="middle">70</text>
<line x1="448.4" y1="17" x2="448.4" y2="24" stroke="#4a4a4a" stroke-width="1"/>
<text x="448.4" y="10.3" text-anchor="middle">80</text>
<line x1="498.4" y1="17" x2="498.4" y2="24" stroke="#4a4a4a" stroke-width="1"/>
<text x="498.4" y="10.3" text-anchor="middle">90</text>
<line x1="548.4" y1="17" x2="548.4" y2="24" stroke="#4a4a4a" stroke-width="1"/>
<text x="548.4" y="10.3" text-anchor="middle">100</text>
<line x1="598.4" y1="17" x2="598.4" y2="24" stroke="#4a4a4a" stroke-width="1"/>
<text x="598.4" y="10.3" text-anchor="middle">110</text>
<line x1="648.4" y1="17" x2="648.4" y2="24" stroke="#4a4a4a" stroke-width="1"/>
<text x="648.4" y="10.3" text-anchor="middle">120</text>
<line x1="698.4" y1="17" x2="698.4" y2="24" stroke="#4a4a4a" stroke-width="1"/>
<text x="698.4" y="10.3" text-anchor="middle">130</text>
<line x1="748.4" y1="17" x2="748.4" y2="24" stroke="#4a4a4a" stroke-width="1"/>
<text x="748.4" y="10.3" text-anchor="middle">140</text>
<line x1="798.4" y1="17" x2="798.4" y2="24" stroke="#4a4a4a" stroke-width="1"/>
<text x="798.4" y="10.3" text-anchor="middle">150</text>
<line x1="848.4" y1="17" x2="848.4" y2="24" stroke="#4a4a4a" stroke-width="1"/>
<text x="848.4" y="10.3" text-anchor="middle">160</text>
<line x1="898.4" y1="17" x2="898.4" y2="24" stroke="#4a4a4a" stroke-width="1"/>
<text x="898.4" y="10.3" text-anchor="middle">170</text>
<line x1="948.4" y1="17" x2="948.4" y2="24" stroke="#4a4a4a" stroke-width="1"/>
<text x="948.4" y="10.3" text-anchor="middle">180</text>
<line x1="998.4" y1="17" x2="998.4" y2="24" stroke="#4a4a4a" stroke-width="1"/>
<text x="998.4" y="10.3" text-anchor="middle">190</text>
<line x1="1048.4" y1="17" x2="1048.4" y2="24" stroke="#4a4a4a" stroke-width="1"/>
<text x="1048.4" y="10.3" text-anchor="middle">200</text>
<g clip-path="url(#lr)">
<line x1="16" y1="576.3" x2="23" y2="576.3" stroke="#4a4a4a" stroke-width="1"/>
<text transform="translate(9.3,576.3) rotate(-90)" text-anchor="middle">0</text>
<line x1="16" y1="526.3" x2="23" y2="526.3" stroke="#4a4a4a" stroke-width="1"/>
<text transform="translate(9.3,526.3) rotate(-90)" text-anchor="middle">10</text>
<line x1="16" y1="476.3" x2="23" y2="476.3" stroke="#4a4a4a" stroke-width="1"/>
<text transform="translate(9.3,476.3) rotate(-90)" text-anchor="middle">20</text>
<line x1="16" y1="426.3" x2="23" y2="426.3" stroke="#4a4a4a" stroke-width="1"/>
<text transform="translate(9.3,426.3) rotate(-90)" text-anchor="middle">30</text>
<line x1="16" y1="376.3" x2="23" y2="376.3" stroke="#4a4a4a" stroke-width="1"/>
<text transform="translate(9.3,376.3) rotate(-90)" text-anchor="middle">40</text>
<line x1="16" y1="326.3" x2="23" y2="326.3" stroke="#4a4a4a" stroke-width="1"/>
<text transform="translate(9.3,326.3) rotate(-90)" text-anchor="middle">50</text>
<line x1="16" y1="276.3" x2="23" y2="276.3" stroke="#4a4a4a" stroke-width="1"/>
<text transform="translate(9.3,276.3) rotate(-90)" text-anchor="middle">60</text>
<line x1="16" y1="226.3" x2="23" y2="226.3" stroke="#4a4a4a" stroke-width="1"/>
<text transform="translate(9.3,226.3) rotate(-90)" text-anchor="middle">70</text>
<line x1="16" y1="176.3" x2="23" y2="176.3" stroke="#4a4a4a" stroke-width="1"/>
<text transform="translate(9.3,176.3) rotate(-90)" text-anchor="middle">80</text>
<line x1="16" y1="126.3" x2="23" y2="126.3" stroke="#4a4a4a" stroke-width="1"/>
<text transform="translate(9.3,126.3) rotate(-90)" text-anchor="middle">90</text>
<line x1="16" y1="76.3" x2="23" y2="76.3" stroke="#4a4a4a" stroke-width="1"/>
<text transform="translate(9.3,76.3) rotate(-90)" text-anchor="middle">100</text>
<line x1="16" y1="26.3" x2="23" y2="26.3" stroke="#4a4a4a" stroke-width="1"/>
<text transform="translate(9.3,26.3) rotate(-90)" text-anchor="middle">110</text>
</g>
<path d="M359 14h12.6l-6.3 6.300z" fill="#000"/>
<path d="M13.2 153v12l7.2 -6z" fill="#000"/>
</svg>
<div id="vscroll" class="abs"></div><div id="vthumb" class="abs"></div>
<div id="hscroll" class="abs"></div><div id="hthumb" class="abs"></div>
<div id="zoomlabel" class="abs">10 &lt; 100</div>
<div id="cmdhist" class="abs"><i>Comando:</i> delete</div>
<div id="cmdline" class="abs"></div>
<div id="cmdlabel" class="abs">Comando:</div>
<div id="cmdinput" class="abs"></div>
<div id="cmdbtn" class="abs"><svg style="left:5px;top:6px" width="15" height="11" viewBox="0 0 15 11"><rect x="0.500" y="0.500" width="13.400" height="9.400" fill="#fff" stroke="#222" stroke-width="0.900"/><rect x="0.500" y="0.500" width="13.400" height="2.600" fill="#111"/></svg></div>
<div id="dock" class="abs"></div>
<div id="docktitle" class="abs"><span>Elenco dei livelli</span></div>
<div class="lbtn" style="left:1154.700px;width:61.500px"></div>
<div class="lbtn" style="left:1215.2px;width:60.9px"></div>
<div class="lbtn" style="left:1275.1px;width:60.9px"></div>
<div class="lbtn" style="left:1335.0px;width:61.0px"></div>
<div class="lbtn" style="left:1395.0px;width:60.4px"></div>
<div id="layerlist" class="abs"></div><div id="docksep" class="abs"></div>
<div class="abs" style="left:1183.500px;top:159.500px;font-size:13px;line-height:16px;color:#111">0</div>
<div id="rightbar" class="abs"></div>
<div class="sel" style="left:1456px;top:121px;width:48px;height:41.500px"></div>
<div class="sel" style="left:1456px;top:417px;width:48px;height:42.500px"></div>
<div class="hsep" style="left:1458px;top:261px;width:42px"></div>
<div class="hsep" style="left:1458px;top:409px;width:42px"></div>
<svg id="dockicons" style="left:0;top:0" width="1500" height="844" viewBox="0 0 1500 844">
<defs>
<g id="eye"><path d="M-7.700 0.400C-5-3.700-2.600-5.500 0-5.500C2.600-5.500 5-3.700 7.700 0.400C5 3.900 2.600 5.500 0 5.500C-2.600 5.500-5 3.900-7.700 0.400Z" fill="currentColor"/><path d="M-5.300 0.800C-3.600-1.500-1.900-2.500 0-2.500C1.900-2.500 3.600-1.500 5.300 0.800C3.600 2.700 1.900 3.600 0 3.600C-1.900 3.600-3.600 2.700-5.300 0.800Z" fill="#fff"/><circle cx="0" cy="0.400" r="3.500" fill="currentColor"/><circle cx="-0.500" cy="-0.900" r="0.900" fill="#fff" fill-opacity="0.750"/></g>
<g id="pencilS"><path d="M0 0L3.800-1.600V1.600Z" fill="#e6c69c" stroke="#6a4a1a" stroke-width="0.400"/><path d="M0 0L1.500-0.650V0.650Z" fill="#222"/><rect x="3.800" y="-1.600" width="11.400" height="3.200" fill="#e8a836" stroke="#8a5a14" stroke-width="0.500"/><rect x="3.800" y="-0.500" width="11.400" height="0.900" fill="#ffd878"/><path d="M15.200-1.600h2.200a1.300 1.600 0 0 1 0 3.200h-2.200z" fill="#e62a2a" stroke="#9a2020" stroke-width="0.300"/></g>
<g id="win"><rect x="0.400" y="0.400" width="26.600" height="26.800" fill="#fff" stroke="#222" stroke-width="0.800"/><rect x="0" y="0" width="27.400" height="4.400" fill="#000"/><rect x="1.100" y="0.800" width="3.200" height="3.200" fill="#fff"/></g>
</defs>
<circle cx="1164" cy="118" r="6.900" fill="#646464"/><path d="M1161.200 115.200l5.600 5.600M1166.800 115.200l-5.600 5.600" stroke="#f2f2f2" stroke-width="1.900" stroke-linecap="round"/>
<circle cx="1182" cy="118" r="6.900" fill="#646464"/><rect x="1180.600" y="114.600" width="5.200" height="4.400" rx="0.600" fill="none" stroke="#f2f2f2" stroke-width="1.100"/><rect x="1178.300" y="117" width="5.200" height="4.400" rx="0.600" fill="#6a6a6a" stroke="#f2f2f2" stroke-width="1.100"/>
<use href="#eye" x="1185" y="143" color="#000"/>
<use href="#eye" x="1245" y="143" color="#a4a4a4"/>
<path d="M1304.700 137.200v11.600M1298.900 143h11.600" stroke="#e8000e" stroke-width="3"/>
<path d="M1358.800 143h11.600" stroke="#e8000e" stroke-width="3"/>
<g transform="translate(1418,149.400) rotate(-42.500)"><use href="#pencilS"/></g>
<rect x="1161.600" y="163.500" width="15" height="8" fill="#fff" stroke="#000" stroke-width="1.200"/>
<g transform="translate(1394.400,173.400) rotate(-42.500)"><use href="#pencilS"/></g>
<use href="#eye" x="1422.900" y="167" color="#000"/>
<g opacity="0.900"><path d="M1441.600 166.600v-2.600a3.300 3.300 0 0 1 6.600 0v2.600" fill="none" stroke="#c2c2c2" stroke-width="1.200"/><rect x="1440.200" y="166.400" width="9.400" height="6.800" fill="#bdbdbd"/></g>
<g fill="#a4a4a4"><rect x="1462" y="116" width="2" height="2"/><rect x="1468" y="116" width="2" height="2"/><rect x="1474" y="116" width="2" height="2"/><rect x="1480" y="116" width="2" height="2"/><rect x="1486" y="116" width="2" height="2"/></g>
<g transform="translate(1463.300,127.4)"><use href="#win"/><g transform="translate(0,0)"><path d="M7 11.600l6-2.600v10l-6 2.600z" fill="#d8d8d8" stroke="#555" stroke-width="0.600"/><path d="M9.600 10.600l6-2.600v10l-6 2.600z" fill="#e4e4e4" stroke="#555" stroke-width="0.600"/><path d="M12.200 9.600l7-3v10.400l-7 3z" fill="#f4f4f4" stroke="#555" stroke-width="0.600"/><path d="M14 16.400l3.400-5.400v5.600z" fill="none" stroke="#e03030" stroke-width="0.700"/></g></g>
<g transform="translate(1463.300,174.3)"><use href="#win"/><rect x="7" y="10" width="10.200" height="7.800" fill="#f2e9b8" stroke="#777" stroke-width="0.700"/><circle cx="15.800" cy="17.400" r="4" fill="#f2e9b8" fill-opacity="0.800" stroke="#777" stroke-width="0.700"/></g>
<g transform="translate(1463.300,220.4)"><use href="#win"/><rect x="5.600" y="10.400" width="16.200" height="10" rx="2" fill="#eef0f6" stroke="#c4cfe4" stroke-width="0.900"/></g>
<g transform="translate(1463.300,276.4)"><use href="#win"/><rect x="3.200" y="8.600" width="4.200" height="3" fill="#000"/><rect x="3.200" y="14.500" width="4.200" height="3" fill="#000"/><rect x="3.200" y="20.400" width="4.200" height="3" fill="#000"/><rect x="10.200" y="8.800" width="13.600" height="2.600" fill="#fff" stroke="#222" stroke-width="0.600"/><rect x="10.200" y="14.700" width="13.600" height="2.600" fill="#fff" stroke="#222" stroke-width="0.600"/><rect x="10.200" y="20.600" width="13.600" height="2.600" fill="#fff" stroke="#222" stroke-width="0.600"/></g>
<g transform="translate(1463.300,322.2)"><use href="#win"/><ellipse cx="13.600" cy="9.600" rx="7" ry="1.800" fill="#9a9a9a" stroke="#555" stroke-width="0.600"/><path d="M6.600 9.800q4 4.600 5.600 8.200v3.200l2.600 1.600v-4.800q1.600-3.600 5.800-8.200q-7 2.600-14 0z" fill="#c4c4c4" stroke="#555" stroke-width="0.600"/></g>
<g transform="translate(1463.300,368.3)"><use href="#win"/><path d="M3.600 15.600H23.600" stroke="#f0a0a0" stroke-width="0.800" stroke-dasharray="2 1"/><path d="M6.400 9.200L13.200 12V19.200L6.400 22Z" fill="#fff" stroke="#333" stroke-width="0.700"/><rect x="13.200" y="12" width="8.400" height="7.200" rx="1.200" fill="#9a9a9a" stroke="#444" stroke-width="0.600"/><path d="M14.600 12v7.200M16.200 12v7.200M17.800 12v7.200M19.400 12v7.200" stroke="#666" stroke-width="0.500"/></g>
<g transform="translate(1463.300,424.3)"><use href="#win"/><path d="M2.400 8.800h13.600M2.400 12h12.400M2.400 15.200h15.400M2.400 18.400h16.400" stroke="#8a8a8a" stroke-width="1.100" stroke-dasharray="1.300 0.500 2 0.400 0.900 0.500"/><path d="M0.400 22.600H27" stroke="#222" stroke-width="0.700"/><path d="M9 25h15" stroke="#888" stroke-width="1.200" stroke-dasharray="1.200 0.400"/><path d="M2.400 25h1.600" stroke="#666" stroke-width="1"/></g>
<g transform="translate(1463.300,471.2)"><use href="#win"/><rect x="7" y="8" width="13.400" height="15" rx="1" fill="#c88a2a" stroke="#8c5a10" stroke-width="0.500"/><rect x="8.600" y="9.600" width="10.200" height="12" fill="#f6f6f6"/><path d="M10 12.400h7.400M10 14.400h7.400M10 16.400h7.400M10 18.400h5" stroke="#c4c4c4" stroke-width="0.600"/><path d="M10.800 9.600v-1.600h1.800l0.400-1.400h1.400l0.400 1.400h1.800v1.600z" fill="#9a9c92" stroke="#666" stroke-width="0.400"/><path d="M18.800 19.200v2.400h-2.600z" fill="#aaa"/></g>
</svg>
<div id="statusbar" class="abs">
<span style="left:2px;top:8px">63.4,83.4</span>
<span style="left:2px;top:28.500px">@-56.6,23.4</span>
<span style="left:256px;top:8px;letter-spacing:0">104.7622&lt;53°</span>
<span style="left:256px;top:28.500px;letter-spacing:0">@61.2464&lt;158°</span>
<div class="abs" style="left:253.500px;top:4px;width:1px;height:40px;background:#8e8e8e"></div>
<span class="h" style="right:801px;top:13px">Selezionare entità o regione</span>
<span class="h" style="right:801px;top:24px">Spostare entità o riferimento</span>
<span class="h" style="left:949px;top:18px">Nessun entità selezionate.</span>
<div class="sdot" style="left:506px;top:21px"></div>
<div class="sdot" style="left:940px;top:21px"></div>
<div class="sdot" style="left:1269px;top:21px"></div>
<svg style="left:716px;top:7px" width="20" height="32" viewBox="0 0 20 32"><path d="M1.600 10q0-9 8.400-9t8.400 9v11q0 9-8.400 9t-8.400-9z" fill="#fff" stroke="#333" stroke-width="0.900"/><path d="M1.800 12.200q8.200 2.400 16.400 0M10 1.200v3" stroke="#333" stroke-width="0.800" fill="none"/><rect x="8.600" y="4.200" width="2.800" height="6.600" rx="1.400" fill="#fff" stroke="#333" stroke-width="0.800"/></svg>
</div>
</body>
</html>
